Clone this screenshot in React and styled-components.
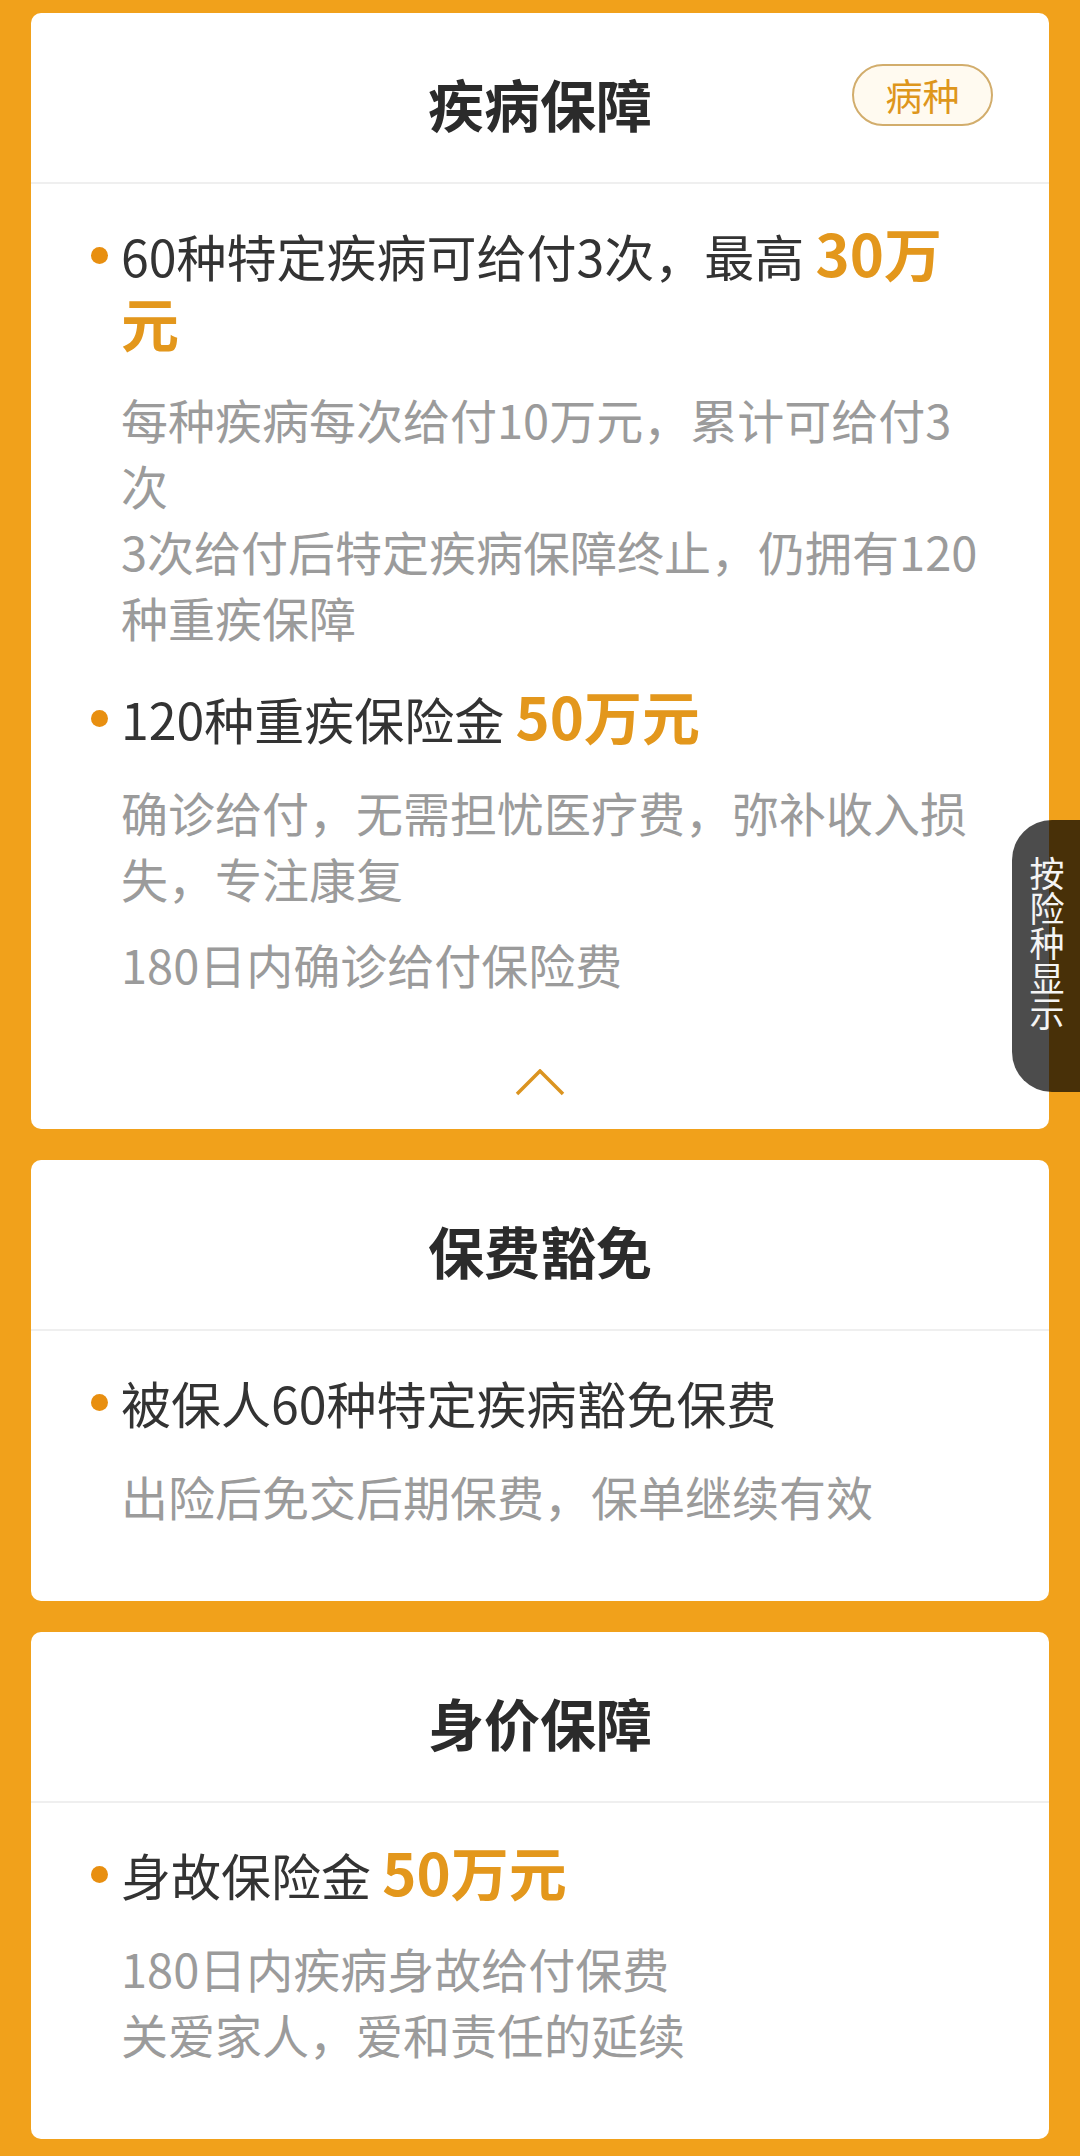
import React from 'react';
import styled, { createGlobalStyle } from 'styled-components';

const Global = createGlobalStyle`
  html, body {
    margin: 0;
    padding: 0;
    background: #f1a11b;
  }
  body {
    font-family: "Noto Sans CJK SC", "Noto Sans", sans-serif;
  }
  * { box-sizing: border-box; }
`;

const Page = styled.div`
  position: relative;
  width: 1080px;
  min-height: 2156px;
  padding: 13px 31px 13px;
  display: flex;
  flex-direction: column;
  gap: 31px;
  background: #f1a11b;
`;

const Card = styled.section`
  background: #ffffff;
  border-radius: 10px;
  overflow: hidden;
`;

const Header = styled.header`
  display: grid;
  grid-template-columns: 1fr auto 1fr;
  align-items: start;
  padding: 50px 0 39px;
  border-bottom: 2px solid #efefef;
`;

const Title = styled.h2`
  grid-column: 2;
  margin: 0;
  font-size: 56px;
  line-height: 80px;
  font-weight: 700;
  color: #2b2b2b;
  letter-spacing: 0;
`;

const Badge = styled.span`
  grid-column: 3;
  justify-self: end;
  margin: 1px 56px 0 0;
  width: 141px;
  height: 62px;
  border-radius: 31px;
  border: 2px solid #d2ad6c;
  background: #fffaf0;
  color: #de961c;
  font-size: 37px;
  line-height: 1;
  display: flex;
  align-items: center;
  justify-content: center;
`;

const Body = styled.div`
  padding: 36px 60px ${(p) => (p.$tight ? '0' : '72px')} 60px;
  display: flex;
  flex-direction: column;
  gap: 33px;
`;

const Item = styled.div`
  display: grid;
  grid-template-columns: 18px 1fr;
  column-gap: 12px;
`;

const Dot = styled.span`
  width: 17px;
  height: 17px;
  border-radius: 50%;
  background: #e88f10;
  margin-top: 27px;
`;

const Lead = styled.p`
  margin: 0;
  font-size: 50px;
  line-height: 70px;
  color: #333333;
`;

const Amount = styled.strong`
  font-size: 58px;
  line-height: 1;
  font-weight: 700;
  color: #e3971c;
`;

const Descs = styled.div`
  grid-column: 2;
  margin-top: 26px;
  display: flex;
  flex-direction: column;
  gap: 20px;
`;

const Desc = styled.p`
  margin: 0;
  font-size: 47px;
  line-height: 66px;
  color: #9b9b9b;
`;

const Line = styled.span`
  display: block;
`;

const Footer = styled.div`
  display: flex;
  justify-content: center;
  padding: 72px 0 33px;
`;

const SideTab = styled.button`
  position: absolute;
  top: 820px;
  right: 0;
  width: 68px;
  height: 272px;
  border: none;
  border-radius: 40px 0 0 40px;
  background: rgba(0, 0, 0, 0.7);
  color: #f4f4f4;
  font-family: "Noto Sans CJK SC", sans-serif;
  font-size: 35px;
  line-height: 1;
  padding: 36px 0 0 2px;
  display: flex;
  justify-content: center;
  align-items: flex-start;
  cursor: pointer;
`;

const VerticalText = styled.span`
  writing-mode: vertical-rl;
  text-orientation: upright;
  letter-spacing: 0;
`;

const Chevron = () => (
  <svg width="50" height="27" viewBox="0 0 50 27" aria-hidden="true">
    <polyline
      points="2,25 25,2 48,25"
      fill="none"
      stroke="#db9420"
      strokeWidth="3.5"
      strokeLinecap="butt"
      strokeLinejoin="miter"
    />
  </svg>
);

const cards = [
  {
    title: '疾病保障',
    badge: '病种',
    collapsible: true,
    items: [
      {
        lead: '60种特定疾病可给付3次，最高',
        amount: '30万元',
        paras: [
          ['每种疾病每次给付10万元，累计可给付3次', '3次给付后特定疾病保障终止，仍拥有120种重疾保障'],
        ],
      },
      {
        lead: '120种重疾保险金',
        amount: '50万元',
        paras: [['确诊给付，无需担忧医疗费，弥补收入损失，专注康复'], ['180日内确诊给付保险费']],
      },
    ],
  },
  {
    title: '保费豁免',
    items: [
      {
        lead: '被保人60种特定疾病豁免保费',
        paras: [['出险后免交后期保费，保单继续有效']],
      },
    ],
  },
  {
    title: '身价保障',
    items: [
      {
        lead: '身故保险金',
        amount: '50万元',
        paras: [['180日内疾病身故给付保费', '关爱家人，爱和责任的延续']],
      },
    ],
  },
];

function CoverageCard({ card }) {
  return (
    <Card>
      <Header>
        <Title>{card.title}</Title>
        {card.badge && <Badge>{card.badge}</Badge>}
      </Header>
      <Body $tight={card.collapsible}>
        {card.items.map((it, i) => (
          <Item key={i}>
            <Dot />
            <Lead>
              {it.lead}
              {it.amount && (
                <>
                  {' '}
                  <Amount>{it.amount}</Amount>
                </>
              )}
            </Lead>
            <Descs>
              {it.paras.map((lines, j) => (
                <Desc key={j}>
                  {lines.map((l, k) => (
                    <Line key={k}>{l}</Line>
                  ))}
                </Desc>
              ))}
            </Descs>
          </Item>
        ))}
      </Body>
      {card.collapsible && (
        <Footer>
          <Chevron />
        </Footer>
      )}
    </Card>
  );
}

export default function App() {
  return (
    <>
      <Global />
      <Page>
        {cards.map((c) => (
          <CoverageCard key={c.title} card={c} />
        ))}
        <SideTab type="button">
          <VerticalText>按险种显示</VerticalText>
        </SideTab>
      </Page>
    </>
  );
}
